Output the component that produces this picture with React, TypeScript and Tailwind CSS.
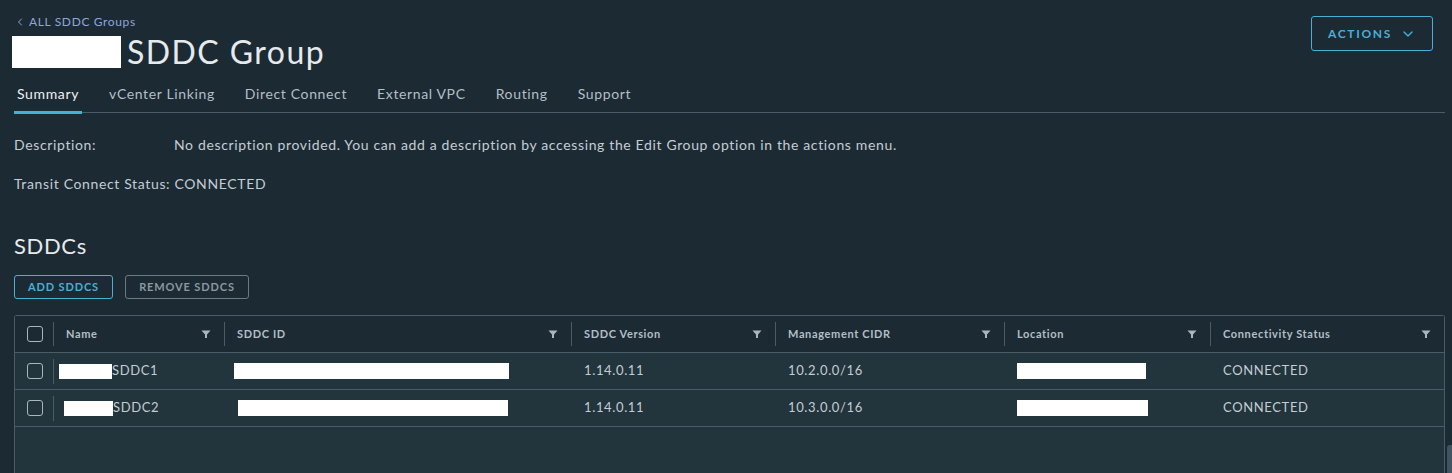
import { ChevronDown, ChevronLeft } from "lucide-react";

const font = { fontFamily: "Lato, 'Open Sans', sans-serif", letterSpacing: "0.04em" };

const tabs = ["Summary", "vCenter Linking", "Direct Connect", "External VPC", "Routing", "Support"];

const columns = [
  "Name",
  "SDDC ID",
  "SDDC Version",
  "Management CIDR",
  "Location",
  "Connectivity Status",
];

const rows = [
  { name: "SDDC1", nameBox: "w-[53px] ml-0", idBox: "w-[275px] ml-[-3px]", cidr: "10.2.0.0/16", locBox: "w-[129px]" },
  { name: "SDDC2", nameBox: "w-[49px] ml-[5px]", idBox: "w-[270px] ml-[1px]", cidr: "10.3.0.0/16", locBox: "w-[131px]" },
];

const grid = "grid grid-cols-[39px_171px_347px_204px_229px_206px_1fr]";

function FilterIcon() {
  return (
    <svg width="10" height="10" viewBox="0 0 10 10" className="shrink-0">
      <path d="M0.5 1.5h9L6 5.5V9H4V5.5z" fill="#a9b6be" />
    </svg>
  );
}

function Checkbox() {
  return <div className="h-4 w-4 rounded-[3px] border border-[#a9b6be]" />;
}

export default function App() {
  return (
    <div className="relative h-[473px] overflow-hidden bg-[#1c2a33] text-[#c4cdd3]" style={font}>
      <div className="pl-[14px] pr-[7px]">
        {/* Header */}
        <div className="flex items-start justify-between">
          <div className="pt-[13px]">
            <a className="flex items-center gap-[3px] text-[12px] text-[#8ea6d8]">
              <ChevronLeft className="h-3 w-3" strokeWidth={2} />
              <span>ALL SDDC Groups</span>
            </a>
            <div className="mt-[5px] flex items-center gap-[6px] -ml-[2px]">
              <div className="h-[32px] w-[109px] bg-white" />
              <h1 className="text-[32px] leading-[32px] tracking-[0.045em] text-[#e6eaed]">SDDC Group</h1>
            </div>
          </div>
          <button className="mt-[16px] mr-[12px] flex h-[35px] w-[122px] items-center justify-center gap-[8px] rounded-[3px] border border-[#49afd9] text-[12px] font-bold tracking-[0.14em] text-[#49afd9]">
            ACTIONS
            <ChevronDown className="h-4 w-4" strokeWidth={2} />
          </button>
        </div>

        {/* Tabs */}
        <div className="mt-[15px] flex gap-[24px] border-b border-[#4b5c68]">
          {tabs.map((t, i) => (
            <div
              key={t}
              className={
                i === 0
                  ? "-mb-[2px] border-b-[3px] border-[#49afd9] px-[3px] pb-[6px] text-[14px] text-[#eef1f3]"
                  : "px-[3px] pb-[8px] text-[14px] text-[#b3bfc6]"
              }
            >
              {t}
            </div>
          ))}
        </div>

        {/* Details */}
        <div className="mt-[21px] flex text-[14px]">
          <span className="w-[160px]">Description:</span>
          <span>No description provided. You can add a description by accessing the Edit Group option in the actions menu.</span>
        </div>
        <div className="mt-[18px] text-[14px]">Transit Connect Status: CONNECTED</div>

        {/* SDDCs */}
        <h2 className="mt-[38px] text-[22px] leading-[28px] text-[#e6eaed]">SDDCs</h2>
        <div className="mt-[15px] flex gap-[12px]">
          <button className="h-[24px] w-[99px] rounded-[3px] border border-[#49afd9] text-[11px] font-bold tracking-[0.08em] text-[#49afd9]">
            ADD SDDCS
          </button>
          <button className="h-[24px] w-[124px] rounded-[3px] border border-[#6c7a84] text-[11px] font-bold tracking-[0.08em] text-[#8c989f]">
            REMOVE SDDCS
          </button>
        </div>

        {/* Table */}
        <div className="mt-[16px] w-[1431px] rounded-t-[3px] border border-b-0 border-[#4b5c68] bg-[#22343c]">
          <div className={`${grid} h-[37px] border-b border-[#4b5c68] bg-[#1c2a33] text-[11px] font-bold text-[#b3bfc6]`}>
            <div className="flex items-center justify-between pl-[12px]">
              <Checkbox />
              <div className="h-[24px] w-px bg-[#4b5c68]" />
            </div>
            {columns.map((c, i) => (
              <div key={c} className="flex items-center">
                <div className="flex flex-1 items-center justify-between pl-[12px] pr-[13px]">
                  <span>{c}</span>
                  <FilterIcon />
                </div>
                {i < columns.length - 1 && <div className="h-[24px] w-px bg-[#4b5c68]" />}
              </div>
            ))}
          </div>
          {rows.map((r) => (
            <div key={r.name} className={`${grid} h-[37px] border-b border-[#4b5c68] text-[13px] text-[#c4cdd3]`}>
              <div className="flex items-center justify-between pl-[12px]">
                <Checkbox />
                <div className="h-[25px] w-px bg-[#4b5c68]" />
              </div>
              <div className="flex items-center pl-[5px]">
                <div className={`h-[15px] bg-white ${r.nameBox}`} />
                <span>{r.name}</span>
              </div>
              <div className="flex items-center pl-[12px]">
                <div className={`h-[16px] bg-white ${r.idBox}`} />
              </div>
              <div className="flex items-center pl-[12px]">1.14.0.11</div>
              <div className="flex items-center pl-[12px]">{r.cidr}</div>
              <div className="flex items-center pl-[12px]">
                <div className={`h-[16px] bg-white ${r.locBox}`} />
              </div>
              <div className="flex items-center pl-[12px]">CONNECTED</div>
            </div>
          ))}
          <div className="h-[60px]" />
        </div>
      </div>
      {/* scrollbar thumb */}
      <div className="absolute bottom-0 right-0 h-[28px] w-[5px] rounded-tl-[3px] bg-[#3e5462]" />
    </div>
  );
}
